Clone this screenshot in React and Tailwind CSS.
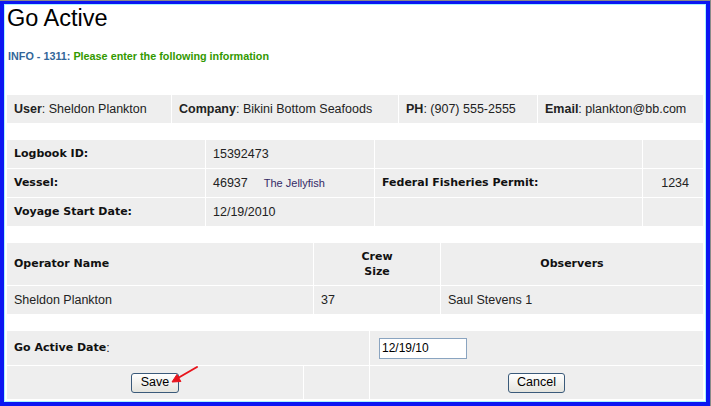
import React from "react";

const cell = "bg-[#eeeeee] flex items-center";
const label = "font-['DejaVu_Sans',Verdana,sans-serif] font-bold text-[11px] text-[#111]";

const Arrow = () => (
  <svg
    className="absolute left-0 top-0 w-[200px] h-[20px] overflow-visible pointer-events-none"
    viewBox="0 0 200 20"
  >
    <line x1="190" y1="1" x2="171" y2="12" stroke="#e8141c" strokeWidth="2" strokeLinecap="round" />
    <polygon points="165,16 169.9,8.5 173.9,15.5" fill="#e8141c" stroke="#e8141c" strokeWidth="1" strokeLinejoin="round" />
  </svg>
);

const Button = ({ children, width }) => (
  <button
    className={`${width} h-[20px] rounded-[3px] border border-[#3a5a7a] bg-gradient-to-b from-white to-[#e4e4de] text-[12.5px] leading-none text-black`}
  >
    {children}
  </button>
);

export default function App() {
  return (
    <div className="w-[711px] h-[406px] overflow-hidden bg-[#0a16f2] border-t border-r border-[#8a8a8a] pt-[3px] pl-[4px] pr-[4px] pb-[4px] font-['Liberation_Sans',Arial,sans-serif] text-[#222]">
      <div className="h-full border border-[#a6f2ff] bg-white p-[2px] flex flex-col">
        <h1 className="text-[23.5px] leading-[22px] h-[22px] text-black">Go Active</h1>

        <p className="mt-[21px] ml-px text-[10.8px] leading-[13px] font-bold">
          <span className="text-[#336699]">INFO - 1311: </span>
          <span className="text-[#339900]">Please enter the following information</span>
        </p>

        {/* user summary */}
        <div className="mt-[32px] grid grid-cols-[164px_226px_138px_1fr] gap-px bg-white text-[12.5px]">
          <div className={`${cell} h-[28px] pl-[7px]`}>
            <b>User</b>: Sheldon Plankton
          </div>
          <div className={`${cell} pl-[7px]`}>
            <b>Company</b>: Bikini Bottom Seafoods
          </div>
          <div className={`${cell} pl-[7px]`}>
            <b>PH</b>: (907) 555-2555
          </div>
          <div className={`${cell} pl-[7px]`}>
            <b>Email</b>: plankton@bb.com
          </div>
        </div>

        {/* logbook */}
        <div className="mt-[17px] grid grid-cols-[198px_168px_267px_1fr] auto-rows-[28px] gap-px bg-white text-[12.5px]">
          <div className={`${cell} pl-[7px]`}>
            <span className={label}>Logbook ID:</span>
          </div>
          <div className={`${cell} pl-[7px]`}>15392473</div>
          <div className={cell}></div>
          <div className={cell}></div>

          <div className={`${cell} pl-[7px]`}>
            <span className={label}>Vessel:</span>
          </div>
          <div className={`${cell} pl-[7px]`}>
            46937
            <span className="ml-[16px] text-[11px] text-[#332a66]">The Jellyfish</span>
          </div>
          <div className={`${cell} pl-[7px]`}>
            <span className={label}>Federal Fisheries Permit:</span>
          </div>
          <div className={`${cell} justify-end pr-[14px]`}>1234</div>

          <div className={`${cell} pl-[7px]`}>
            <span className={label}>Voyage Start Date:</span>
          </div>
          <div className={`${cell} pl-[7px]`}>12/19/2010</div>
          <div className={cell}></div>
          <div className={cell}></div>
        </div>

        {/* operator */}
        <div className="mt-[17px] grid grid-cols-[306px_126px_1fr] grid-rows-[42px_28px] gap-px bg-white text-[12.5px]">
          <div className={`${cell} pl-[7px]`}>
            <span className={label}>Operator Name</span>
          </div>
          <div className={`${cell} justify-center text-center`}>
            <span className={`${label} leading-[15px]`}>
              Crew
              <br />
              Size
            </span>
          </div>
          <div className={`${cell} justify-center`}>
            <span className={label}>Observers</span>
          </div>

          <div className={`${cell} pl-[7px]`}>Sheldon Plankton</div>
          <div className={`${cell} pl-[7px]`}>37</div>
          <div className={`${cell} pl-[7px]`}>Saul Stevens 1</div>
        </div>

        {/* go active */}
        <div className="mt-[17px] grid grid-cols-[296px_65px_1fr] grid-rows-[34px_33px] gap-px bg-white text-[12.5px]">
          <div className={`${cell} col-span-2 pl-[7px]`}>
            <span className={label}>Go Active Date</span>:
          </div>
          <div className={`${cell} pl-[9px]`}>
            <input
              defaultValue="12/19/10"
              className="w-[88px] h-[21px] border border-[#8aa4c0] bg-white px-[2px] text-[12px] text-black outline-none"
            />
          </div>

          <div className={`${cell} relative justify-center`}>
            <Button width="w-[48px]">Save</Button>
            <Arrow />
          </div>
          <div className={cell}></div>
          <div className={`${cell} justify-center`}>
            <Button width="w-[57px]">Cancel</Button>
          </div>
        </div>
      </div>
    </div>
  );
}
